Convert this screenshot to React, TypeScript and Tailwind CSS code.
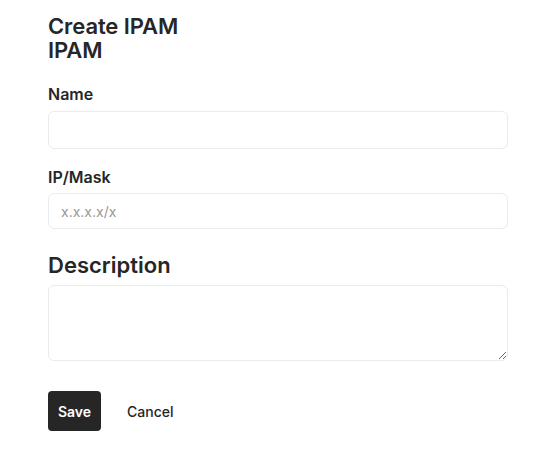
import React from "react";

export default function App() {
  return (
    <div
      className="min-h-screen bg-white text-[#262626]"
      style={{ fontFamily: "Inter, 'Noto Sans', sans-serif" }}
    >
      <div className="pl-12 pr-8 pt-[14px] w-[539px]">
        <h1 className="text-[22px] leading-[24px] font-semibold tracking-[-0.1px]">
          Create IPAM
          <br />
          IPAM
        </h1>
        <form className="mt-[22px] w-[460px]">
          <label className="block text-[16px] leading-[20px] font-semibold mb-[7px]">Name</label>
          <input
            type="text"
            className="block w-full h-[38px] rounded-md border border-[#ebebeb] px-3 text-sm outline-none"
          />
          <label className="block text-[16px] leading-[20px] font-semibold mt-[18px] mb-[6px]">IP/Mask</label>
          <input
            type="text"
            placeholder="x.x.x.x/x"
            className="block w-full h-[36px] rounded-md border border-[#ebebeb] px-3 text-[14px] outline-none placeholder:text-[#999999]"
          />
          <h2 className="mt-[22px] text-[22px] leading-[28px] font-semibold">Description</h2>
          <textarea className="mt-[6px] block w-full h-[76px] rounded-md border border-[#ebebeb] px-3 py-2 text-sm outline-none" />
          <div className="mt-[30px] flex items-center gap-[26px]">
            <button
              type="button"
              className="h-[40px] w-[53px] rounded-[4px] bg-[#262626] text-white text-[14px] font-semibold"
            >
              Save
            </button>
            <button type="button" className="text-[14px] font-medium text-[#262626]">
              Cancel
            </button>
          </div>
        </form>
      </div>
    </div>
  );
}
